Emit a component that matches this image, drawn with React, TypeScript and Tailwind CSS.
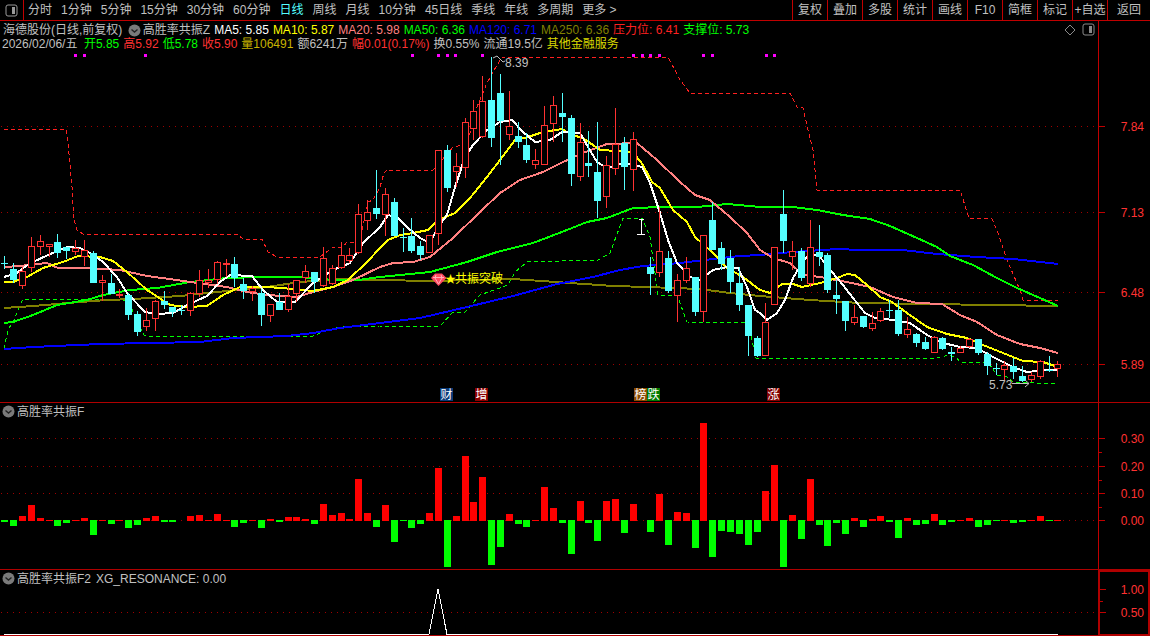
import { ReactNode } from 'react';

const FONT = "font-['Liberation_Sans','Noto_Sans_CJK_SC',sans-serif]";

const PERIODS = ['分时', '1分钟', '5分钟', '15分钟', '30分钟', '60分钟', '日线', '周线', '月线', '10分钟', '45日线', '季线', '年线', '多周期', '更多 >'];
const TOOLS = ['复权', '叠加', '多股', '统计', '画线', 'F10', '简框', '标记', '+自选'];

// up, high, top, bottom, low (screen y)
const CANDLES: number[][] = [
  [0, 256, 263, 264, 269], [0, 263, 269, 280, 283], [1, 267, 271, 286, 289], [1, 237, 246, 268, 272], [1, 235, 241, 247, 255],
  [1, 244, 244, 247, 257], [0, 234, 242, 253, 258], [0, 247, 247, 251, 259], [1, 240, 248, 252, 255], [1, 240, 250, 257, 266],
  [0, 251, 253, 283, 283], [1, 275, 280, 283, 301], [0, 274, 283, 294, 294], [1, 289, 294, 296, 298], [0, 293, 295, 315, 320],
  [0, 311, 314, 332, 336], [1, 308, 320, 327, 331], [1, 300, 301, 319, 331], [0, 291, 301, 305, 309], [0, 307, 307, 312, 317],
  [0, 305, 310, 311, 315], [1, 292, 293, 311, 316], [1, 270, 280, 294, 297], [1, 269, 280, 283, 288], [1, 261, 262, 280, 284],
  [1, 259, 263, 265, 277], [0, 257, 264, 278, 287], [0, 278, 284, 291, 299], [1, 286, 288, 292, 301], [0, 289, 293, 315, 326],
  [1, 304, 304, 316, 322], [0, 293, 302, 310, 310], [1, 284, 296, 310, 312], [1, 280, 280, 294, 302], [1, 265, 271, 278, 283],
  [0, 272, 272, 282, 293], [1, 247, 258, 286, 287], [1, 265, 268, 284, 285], [1, 242, 255, 268, 269], [1, 248, 255, 261, 263],
  [1, 204, 214, 253, 254], [1, 200, 212, 221, 230], [0, 170, 208, 214, 219], [1, 188, 194, 215, 236], [0, 198, 202, 236, 236],
  [0, 228, 237, 238, 252], [0, 218, 236, 251, 253], [0, 241, 246, 255, 260], [1, 235, 235, 253, 253], [1, 150, 150, 234, 245],
  [0, 145, 150, 188, 192], [1, 153, 166, 172, 187], [1, 118, 122, 168, 178], [1, 100, 111, 129, 140], [1, 76, 101, 137, 138],
  [0, 57, 100, 138, 147], [0, 74, 93, 121, 165], [1, 91, 126, 135, 140], [0, 122, 136, 142, 148], [0, 133, 145, 160, 163],
  [1, 149, 160, 165, 169], [1, 106, 125, 165, 165], [1, 96, 105, 124, 142], [0, 93, 113, 117, 142], [0, 115, 118, 174, 186],
  [1, 123, 142, 177, 181], [0, 131, 163, 166, 177], [0, 122, 172, 201, 218], [1, 156, 165, 197, 208], [1, 108, 144, 169, 175],
  [0, 137, 143, 167, 190], [1, 132, 139, 170, 191], [], [0, 257, 267, 274, 295], [1, 207, 251, 273, 277],
  [0, 251, 258, 291, 293], [1, 274, 280, 296, 322], [1, 257, 268, 281, 283], [0, 277, 277, 312, 316], [1, 235, 235, 312, 322],
  [0, 202, 220, 250, 250], [0, 242, 248, 264, 270], [0, 250, 258, 282, 293], [0, 267, 283, 305, 311], [0, 305, 305, 336, 356],
  [0, 336, 338, 356, 357], [1, 303, 322, 356, 356], [1, 247, 247, 305, 305], [0, 190, 214, 241, 253], [1, 241, 251, 257, 270],
  [0, 248, 251, 278, 281], [1, 220, 247, 284, 287], [0, 225, 252, 257, 266], [0, 253, 255, 290, 293], [0, 280, 295, 299, 314],
  [0, 301, 301, 321, 331], [1, 305, 317, 323, 325], [0, 316, 316, 327, 328], [1, 312, 323, 329, 331], [1, 308, 311, 321, 322],
  [0, 300, 310, 311, 318], [0, 300, 310, 334, 336], [1, 317, 329, 335, 338], [0, 333, 334, 343, 347], [0, 337, 342, 349, 350],
  [1, 336, 337, 353, 353], [0, 337, 338, 349, 350], [0, 347, 352, 354, 361], [1, 346, 348, 353, 353], [1, 338, 339, 347, 348],
  [0, 339, 339, 353, 355], [0, 352, 354, 366, 375], [0, 363, 368, 369, 375], [1, 361, 365, 370, 380], [0, 358, 366, 372, 379],
  [0, 366, 376, 381, 382], [1, 372, 375, 380, 382], [1, 360, 361, 377, 379], [0, 356, 370, 371, 372], [1, 361, 364, 369, 377],
];

const BARS = [
  -2, -6, 5, 16, 3, 1, -6, -3, 1, 3, -15, 1, -4, 1, -8, -5, 3, 5, -2, -2, 0, 5, 6, 1, 7, 1, -7, -3, 1, -8, 2, -2, 4, 4, 2, -4, 17, 6, 8, 2,
  42, 8, -7, 16, -22, -1, -8, -4, 8, 53, -47, 5, 65, 19, 44, -45, -27, 7, -4, -7, 1, 34, 13, -3, -34, 20, -3, -21, 20, 22, -13, 17, 0, -12, 27, -25, 9, 8, -28, 98,
  -37, -11, -12, -14, -25, -12, 30, 56, -47, 6, -19, 42, -5, -26, -3, -14, 3, -7, 2, 5, -2, -18, 3, -5, -4, 7, -5, -2, 1, 3, -7, -5, -1, 1, -3, -2, 1, 5, -1, 1,
];

const MA5 = '4,277 17,273 23,268 33,262 48,255 67,247 80,248 90,253 103,262 117,277 127,293 145,312 158,314 173,313 187,305 207,296 220,282 230,275 252,276 263,290 277,302 295,302 313,283 333,270 350,263 363,243 380,227 388,215 397,217 408,228 420,238 430,243 438,227 447,215 455,187 465,157 473,145 487,130 500,122 512,120 523,132 535,142 550,140 562,132 580,133 588,147 597,162 607,168 623,163 642,167 650,183 660,213 668,240 677,263 690,277 700,280 713,270 727,267 738,268 747,287 755,310 760,313 767,320 777,313 785,300 793,278 802,263 810,253 820,257 832,272 843,285 853,298 865,313 875,318 893,320 910,323 927,335 943,343 960,347 977,348 993,357 1013,367 1027,372 1047,370 1058,370';
const MA10 = '4,282 13,282 27,277 43,268 63,262 78,256 100,257 113,261 127,272 147,290 170,305 187,307 207,306 223,295 240,287 267,287 293,289 313,291 333,287 348,280 367,262 380,248 388,240 400,235 413,233 428,230 438,220 455,213 470,198 487,177 500,160 515,140 528,137 543,132 562,129 572,135 583,138 600,150 618,151 633,152 643,165 652,182 660,188 673,210 687,222 695,237 713,253 727,268 743,277 760,290 770,293 782,284 793,284 802,287 820,283 837,278 847,274 855,275 867,285 880,297 892,302 907,313 927,327 947,334 967,338 983,345 1003,353 1023,361 1043,362 1058,367';
const MA20 = '4,267 20,266 47,263 58,268 87,268 120,270 147,276 177,280 190,282 227,287 247,292 267,295 297,297 313,292 333,287 353,280 380,267 393,263 413,262 430,257 453,238 480,212 500,193 520,180 543,172 563,162 583,153 607,144 637,143 657,160 680,182 695,195 710,200 730,217 747,233 760,250 773,258 790,263 803,275 820,277 847,282 870,287 893,297 917,303 942,304 960,315 977,322 997,335 1020,344 1040,348 1058,353';
const MA50 = '4,323 13,322 33,315 57,305 87,300 103,295 130,290 157,288 190,282 227,278 260,277 300,277 333,280 358,280 380,277 430,272 467,262 497,252 533,243 567,230 587,222 607,218 633,208 663,207 697,207 727,204 760,207 793,207 817,210 843,215 870,219 890,226 917,238 937,247 950,256 973,265 997,278 1017,288 1040,298 1058,306';
const MA120 = '4,349 33,347 100,344 200,342 233,338 287,336 313,333 340,328 380,323 420,318 467,307 513,296 557,284 593,277 620,270 643,266 680,263 713,259 740,256 760,255 793,252 837,249 860,250 903,250 937,254 977,257 1013,259 1058,264';
const MA250 = '4,308 33,306 80,302 107,300 133,299 180,296 227,291 267,287 300,282 340,279 380,280 430,281 513,279 570,283 613,286 647,287 700,289 730,293 760,296 810,300 860,303 927,304 993,305 1058,306';
const RESIST = '4,129 66,129 68,143 72,187 74,220 77,230 83,234 237,234 243,239 262,239 268,252 277,257 320,257 328,251 333,247 343,247 347,242 358,242 362,230 368,202 373,200 380,187 384,173 387,170 433,170 442,160 453,147 467,144 477,107 487,83 497,65 502,57 668,57 680,80 690,93 790,93 797,107 803,108 808,130 813,150 817,190 960,190 969,218 992,219 998,233 1007,260 1020,290 1023,300 1058,301';
const SUPPORT = '4,349 8,330 15,318 20,305 23,299 103,299 130,301 133,313 140,327 144,335 147,336 313,336 325,331 340,327 380,326 440,326 452,313 465,312 480,295 508,285 515,272 527,262 598,260 610,253 623,218 642,218 650,237 658,295 677,295 687,322 748,323 753,345 756,358 935,358 950,355 957,358 960,362 988,362 997,375 1007,377 1013,382 1037,383 1058,383';

const SIGNALS = [74, 83, 144, 411, 437, 446, 454, 481, 632, 641, 649, 658, 702, 711, 765, 773];
const TAGS = [
  { x: 440, t: '财', bg: '#0a3a78' },
  { x: 475, t: '增', bg: '#8b0000' },
  { x: 634, t: '榜', bg: '#8b4a00' },
  { x: 647, t: '跌', bg: '#007a00' },
  { x: 767, t: '涨', bg: '#800000' },
];

const cx = (i: number) => Math.round(4.33 + i * 8.85);

function Chevron() {
  return (
    <svg width="13" height="13" viewBox="0 0 13 13" className="shrink-0">
      <circle cx="6.5" cy="6.5" r="6" fill="#7a7a7a" />
      <path d="M3.5 5.5 L6.5 8 L9.5 5.5" fill="none" stroke="#222" strokeWidth="1.4" />
    </svg>
  );
}

function PanelIcon({ color }: { color: string }) {
  return (
    <svg width="13" height="13" viewBox="0 0 13 13" className="shrink-0">
      <rect x="1" y="1" width="11" height="11" rx="2" fill="none" stroke={color} />
      <rect x="7" y="3" width="3" height="7" fill={color} />
    </svg>
  );
}

function Dotted({ y }: { y: number }) {
  return <line x1="1" x2="1098" y1={y + 0.5} y2={y + 0.5} stroke="#a00000" strokeDasharray="1 5" />;
}

function Line({ pts, color }: { pts: string; color: string }) {
  return <polyline points={pts} fill="none" stroke={color} strokeWidth="2" strokeLinejoin="round" shapeRendering="crispEdges" />;
}

function Dashed({ pts, color }: { pts: string; color: string }) {
  return <polyline points={pts} fill="none" stroke={color} strokeDasharray="4 3" shapeRendering="crispEdges" />;
}

function Candle({ i }: { i: number }) {
  const c = CANDLES[i];
  if (!c.length) return null;
  const x = cx(i);
  const [up, h, t, b, l] = c;
  const col = up ? '#ff3232' : '#54ffff';
  return (
    <g shapeRendering="crispEdges">
      <rect x={x} y={h} width="1" height={Math.max(t - h, 0)} fill={col} />
      <rect x={x} y={b} width="1" height={Math.max(l - b, 0)} fill={col} />
      {up ? (
        <rect x={x - 2.5} y={t + 0.5} width="6" height={Math.max(b - t - 1, 1)} fill="#000" stroke={col} />
      ) : (
        <rect x={x - 3} y={t} width="7" height={Math.max(b - t, 1)} fill={col} />
      )}
    </g>
  );
}

function Axis({ box, labels, minor = [], w, h }: { box: string; labels: [string, number][]; minor?: number[]; w: number; h: number }) {
  const x0 = Number(box.split(' ')[0]);
  return (
    <svg width={w} height={h} viewBox={box} className="block">
      {labels.map(([t, y]) => (
        <g key={t}>
          <line x1={x0} x2={x0 + 6} y1={y + 0.5} y2={y + 0.5} stroke="#c00000" />
          <text x="1144" y={y + 4.5} textAnchor="end" fontSize="12" fill="#ff3232">{t}</text>
        </g>
      ))}
      {minor.map((y) => (
        <line key={y} x1={x0} x2={x0 + 3} y1={y + 0.5} y2={y + 0.5} stroke="#c00000" />
      ))}
    </svg>
  );
}

function Item({ color, children }: { color: string; children: ReactNode }) {
  return <span style={{ color }}>{children}</span>;
}

export default function App() {
  return (
    <div className={`w-[1150px] h-[636px] bg-black overflow-hidden text-[12px] leading-[14px] text-[#c0c0c0] ${FONT}`}>
      {/* top toolbar */}
      <div className="h-[21px] border-b border-[#c00000] flex items-center">
        <div className="w-[24px] h-[20px] border-r border-[#c00000] flex items-center justify-center">
          <PanelIcon color="#9a9a9a" />
        </div>
        <div className="flex-1 flex items-center gap-[9px] pl-[4px]">
          {PERIODS.map((p) => (
            <span key={p} className={p === '日线' ? 'text-[#54ffff]' : ''}>{p}</span>
          ))}
        </div>
        {TOOLS.map((t) => (
          <div key={t} className="w-[35px] h-[20px] border-l border-[#c00000] flex items-center justify-center whitespace-nowrap">{t}</div>
        ))}
        <div className="w-[43px] h-[20px] border-l border-[#c00000] flex items-center justify-center">返回</div>
      </div>

      {/* main k-line pane */}
      <div className="h-[382px] border-b border-[#b00000] flex">
        <div className="w-[1098px]">
          <div className="h-[30px] pt-[2px] pl-[3px] relative whitespace-nowrap">
            <div className="flex items-center gap-[4px] h-[14px]">
              <span>海德股份(日线,前复权)</span>
              <span className="ml-[1.5px] flex"><Chevron /></span>
              <span className="-ml-[2px]">高胜率共振Z</span>
              <Item color="#ffffff">MA5: 5.85</Item>
              <Item color="#ffff00">MA10: 5.87</Item>
              <Item color="#ff8080">MA20: 5.98</Item>
              <Item color="#00ff00">MA50: 6.36</Item>
              <Item color="#0000ff">MA120: 6.71</Item>
              <Item color="#808000">MA250: 6.36</Item>
              <Item color="#ff2020">压力位: 6.41</Item>
              <Item color="#00ff00">支撑位: 5.73</Item>
            </div>
            <div className="flex items-center gap-[4px] h-[14px] -ml-[1px]">
              <span className="mr-[2.5px]">2026/02/06/五</span>
              <Item color="#00ff00">开5.85</Item>
              <Item color="#ff3232">高5.92</Item>
              <Item color="#00ff00">低5.78</Item>
              <Item color="#ff3232">收5.90</Item>
              <Item color="#c8b400">量106491</Item>
              <span>额6241万</span>
              <Item color="#ff3232">幅0.01(0.17%)</Item>
              <span>换0.55%</span>
              <span>流通19.5亿</span>
              <Item color="#d8d800">其他金融服务</Item>
            </div>
            <div className="absolute right-[3px] top-[2px] flex items-center gap-[6px]">
              <svg width="12" height="12" viewBox="0 0 12 12">
                <path d="M6 1 L11 6 L6 11 L1 6 Z" fill="none" stroke="#8a8a8a" />
              </svg>
              <PanelIcon color="#8a8a8a" />
            </div>
          </div>
          <svg width="1098" height="351" viewBox="0 51 1098 351" className="block">
            {[126, 212, 292, 364].map((y) => (
              <Dotted key={y} y={y} />
            ))}
            {SIGNALS.map((x) => (
              <rect key={x} x={x} y="54" width="3" height="3" fill="#ff00ff" />
            ))}
            <Dashed pts={RESIST} color="#ff2020" />
            <Dashed pts={SUPPORT} color="#00ff00" />
            <Line pts={MA250} color="#808000" />
            <Line pts={MA120} color="#0000ff" />
            <Line pts={MA50} color="#00ff00" />
            <Line pts={MA20} color="#ff8080" />
            <Line pts={MA10} color="#ffff00" />
            <Line pts={MA5} color="#ffffff" />
            {CANDLES.map((_, i) => (
              <Candle key={i} i={i} />
            ))}
            {/* I marker */}
            <path d="M641.5 219 V234 M639 219 H644 M637 234.5 H645" stroke="#fff" fill="none" shapeRendering="crispEdges" />
            {/* high and low notes */}
            <path d="M493 58 L497 56 L503 62 L505 61" stroke="#c0c0c0" fill="none" />
            <text x="505" y="67" fontSize="12" fill="#c0c0c0">8.39</text>
            <text x="989" y="389" fontSize="12" fill="#c0c0c0">5.73</text>
            <path d="M1012 383.5 H1029 M1025 380 L1029 383.5 L1025 387" stroke="#c0c0c0" fill="none" />
            {/* resonance mark */}
            <path d="M431 278 L435 273.5 L442 273.5 L446.5 278 L438.5 286 Z" fill="#ff4a60" />
            <path d="M433 277.5 H444 M436 275 L435 278 L438.5 284 L442 278 L441 275" stroke="#ffb0bc" fill="none" />
            <text x="445" y="283" fontSize="11" fill="#ffff00">★</text>
            <text x="455" y="283" fontSize="12" fill="#ffff00">共振突破</text>
            {TAGS.map((tag) => (
              <g key={tag.x}>
                <rect x={tag.x} y="388" width="13" height="13" fill={tag.bg} />
                <text x={tag.x + 0.5} y="399" fontSize="12" fill="#fff">{tag.t}</text>
              </g>
            ))}
          </svg>
        </div>
        <div className="w-[52px] border-l border-[#c00000]">
          <Axis box="1099 21 51 381" w={51} h={381} labels={[['7.84', 126], ['7.13', 212], ['6.48', 292], ['5.89', 364]]} />
        </div>
      </div>

      {/* indicator pane */}
      <div className="h-[167px] border-b border-[#b00000] flex">
        <div className="w-[1098px]">
          <div className="h-[17px] pl-[2px] flex items-center gap-[2px]">
            <Chevron />
            <span>高胜率共振F</span>
          </div>
          <svg width="1098" height="149" viewBox="0 420 1098 149" className="block">
            {[438, 466, 493, 520].map((y) => (
              <Dotted key={y} y={y} />
            ))}
            {BARS.map((v, i) =>
              v > 0 ? (
                <rect key={i} x={cx(i) - 3} y={521 - v} width="7" height={v} fill="#ff0000" />
              ) : v < 0 ? (
                <rect key={i} x={cx(i) - 3} y="520" width="7" height={-v} fill="#00ff00" />
              ) : null
            )}
          </svg>
        </div>
        <div className="w-[52px] border-l border-[#c00000]">
          <Axis box="1099 403 51 166" w={51} h={166} labels={[['0.30', 438], ['0.20', 466], ['0.10', 493], ['0.00', 520]]} minor={[452, 480, 507]} />
        </div>
      </div>

      {/* signal pane */}
      <div className="h-[66px] flex">
        <div className="w-[1098px]">
          <div className="h-[17px] pl-[2px] flex items-center gap-[2px] whitespace-nowrap">
            <Chevron />
            <span>高胜率共振F2</span>
            <span className="ml-[3px]">XG_RESONANCE: 0.00</span>
          </div>
          <svg width="1098" height="49" viewBox="0 587 1098 49" className="block">
            <Dotted y={612} />
            <polyline points="4,634.5 429,634.5 438,589 447,634.5 1058,634.5" fill="none" stroke="#fff" shapeRendering="crispEdges" />
            <line x1="0" x2="1098" y1="635.5" y2="635.5" stroke="#b00000" />
          </svg>
        </div>
        <div className="w-[52px] border-2 border-[#b00000]">
          <Axis box="1100 572 48 62" w={48} h={62} labels={[['1.00', 589], ['0.50', 612]]} minor={[601]} />
        </div>
      </div>
    </div>
  );
}
